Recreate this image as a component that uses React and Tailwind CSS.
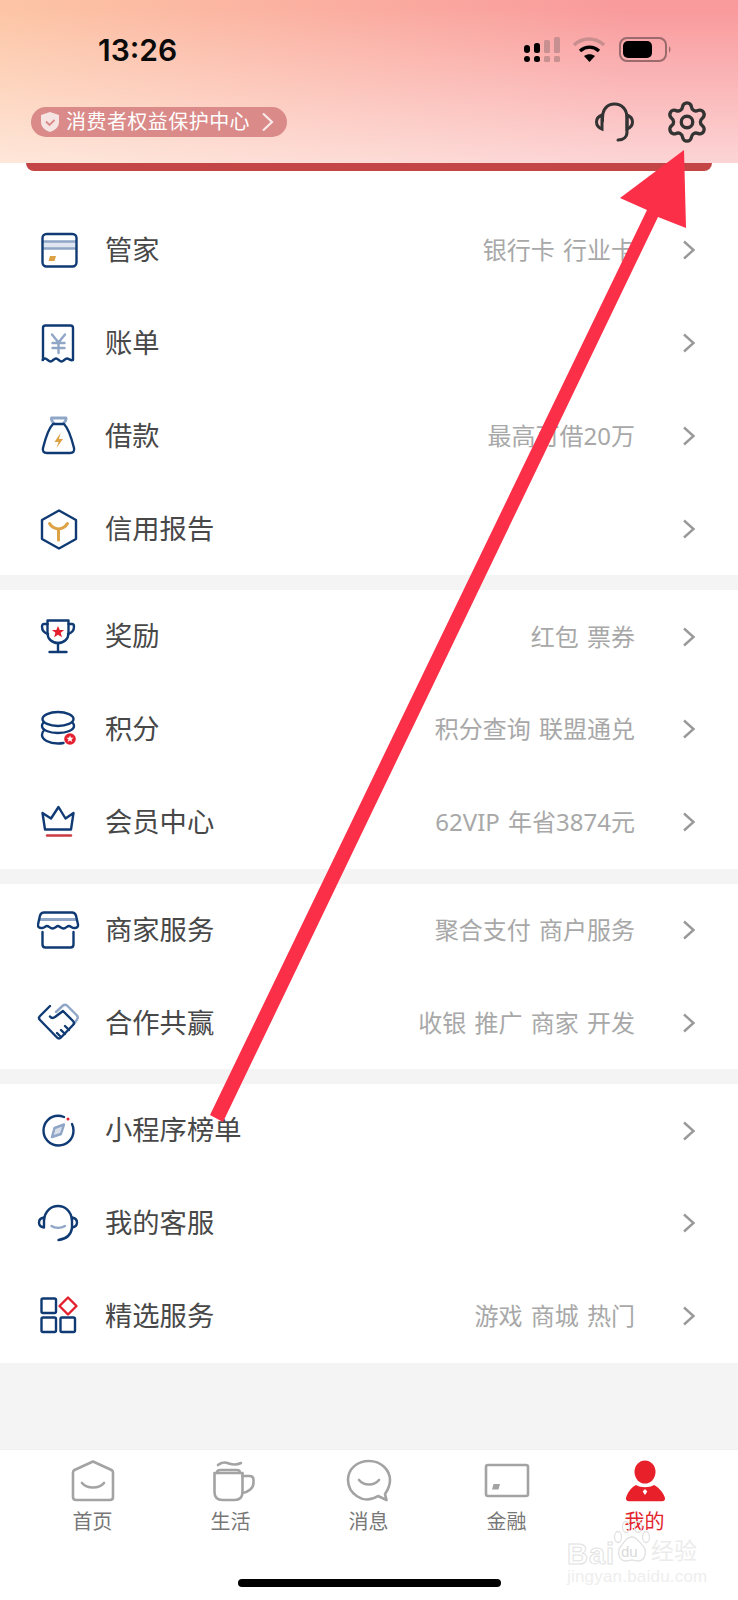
import { Settings } from 'lucide-react'

const NAVY = '#0f3a73'
const LIGHT = '#8fa6c6'
const GOLD = '#dca243'
const RED = '#e5202e'
const GRAY = '#a3a3a3'

const Box = ({ children }) => (
  <svg width="44" height="44" viewBox="0 0 44 44" fill="none" stroke={NAVY} strokeWidth="2.4" strokeLinecap="round" strokeLinejoin="round" className="shrink-0">
    {children}
  </svg>
)

const icons = {
  card: (
    <Box>
      <path d="M6 13h33v8H6z" fill="#dfe6f0" stroke="none" />
      <path d="M6 13.5h33M6 20.5h33" stroke={LIGHT} />
      <rect x="5.5" y="6" width="34" height="32.5" rx="4" />
      <path d="M13 28h6l-1.5 5h-6z" fill={GOLD} stroke="none" />
    </Box>
  ),
  bill: (
    <Box>
      <path d="M6 39V7q0-2.5 2.5-2.5h25Q36 4.500 36 7v32c-2.500 1-4 -1.500-6-1.500s-3.500 3-5.500 3-3.500-3-5.500-3-3.500 3-5.500 3-3.500-3-5.500-3c-1 0-2 1-2.500 1.500z" />
      <path d="M15 13.500l6.500 8 6.500-8M21.500 21.500V32M15.500 22h12M15.500 27h12" stroke={LIGHT} />
    </Box>
  ),
  bag: (
    <Box>
      <path d="M17 9.500c-2-2-3-3-2.500-5.500h14.500c.5 2.500-.5 3.500-2.500 5.500" stroke={LIGHT} strokeWidth="2.800" />
      <path d="M16 10h11c4 4 7 12 10 24q1 5-4 5H10q-5 0-4-5c3-12 6-20 10-24z" />
      <path d="M23.500 19l-6 9h4l-2 6 6.500-9h-4z" fill={GOLD} stroke="none" />
    </Box>
  ),
  hex: (
    <Box>
      <path d="M22 3.500l17 9.500v19l-17 9.500L5 32V13z" />
      <path d="M12.500 16.500c2 3.500 5 5 9 5.500 4-.5 7-2 9-5.500M21.500 22v11" stroke={GOLD} strokeWidth="3" />
    </Box>
  ),
  trophy: (
    <Box>
      <path d="M10.500 5.500h21V18c0 6-4.500 10-10.500 10S10.500 24 10.500 18z" />
      <path d="M10.500 9H7q-2 0-2 2.500c0 3.500 2.500 6.500 6 7.500M31.500 9H35q2 0 2 2.500c0 3.500-2.500 6.500-6 7.500M21 28v9M12.500 37h17" />
      <path d="M21 11l1.800 4h4.400l-3.500 2.800 1.300 4.400L21 19.700l-3.900 2.500 1.300-4.400-3.500-2.800h4.400z" fill={RED} stroke="none" />
    </Box>
  ),
  coins: (
    <Box>
      <ellipse cx="21" cy="12" rx="15.500" ry="7" />
      <path d="M6.500 15.500c-1 1-1.500 2-1.500 3.500 0 4 7 7 16 7s16-3 16-7c0-1.500-.5-2.500-1.500-3.500" />
      <path d="M6.500 24c-1 1-1.500 2.500-1.500 4 0 4.500 7 8.500 16 8.500 2 0 4-.2 5.500-.5" />
      <circle cx="33" cy="32" r="5.800" fill={RED} stroke="none" />
      <path d="M33 28.500l1 2.300h2.500l-2 1.700.8 2.600-2.300-1.500-2.300 1.500.8-2.600-2-1.700H32z" fill="#fff" stroke="none" />
    </Box>
  ),
  crown: (
    <Box>
      <path d="M5.500 13l8.500 5.500L21.500 7l7 11.500 8-5.500-2.500 16.500H8z" />
      <path d="M10 35.500h24" stroke="#cc3a44" />
    </Box>
  ),
  store: (
    <Box>
      <path d="M3 11.500h36" stroke={LIGHT} strokeWidth="2.800" />
      <path d="M7 4.500h28q3 0 4 3l2 9q.5 3-3 3.500c-3 .5-4-2-6-2s-3 2.500-5.500 2.500-4-2.500-5.500-2.500-3 2.500-5.500 2.500-3.500-2.500-5.500-2.500-3 2.500-6 2q-3.500-.5-3-3.500l2-9q1-3 4-3z" />
      <path d="M5.500 24v12.500q0 3 3 3h25q3 0 3-3V24" />
    </Box>
  ),
  shake: (
    <Box>
      <path d="M19 11l7-6.500q2-1.500 4 0l10 10q1.500 2 0 4L37 23" stroke={LIGHT} />
      <path d="M13 5L3 15q-2 2 0 4l17 17.500q2 2 4 0L36 24q2-2 0-4L26 10l-8 6q-3 2-5-.5" />
      <path d="M24 29l4 4M28 25l4 4M20 32l3 3" />
    </Box>
  ),
  compass: (
    <Box>
      <path d="M27 8c-2-.8-4-1.200-6-1.200C13 6.800 6.500 13.300 6.500 21.500S13 36.500 21.500 36.500 36.500 30 36.500 21.500c0-2.500-.5-4.500-1.500-6.500" />
      <path d="M15 28l2.500-9L27 15.500 24 25z" stroke={LIGHT} fill="#d7dfeb" />
      <circle cx="31" cy="10" r="1.500" fill={RED} stroke="none" />
    </Box>
  ),
  agent: (
    <Box>
      <path d="M7 19C8 10 14 5 21 5s13 5 14 14" />
      <path d="M7 16.500q-5 .8-5 5t5 5zM35 16.500q5 .8 5 5t-5 5z" />
      <path d="M35 27c-1 7-6 11-13.500 12" />
      <path d="M14.500 25c3.500 2.500 9.500 2.500 13.500 0" stroke={LIGHT} />
    </Box>
  ),
  grid: (
    <Box>
      <rect x="4.500" y="4.500" width="14.500" height="14.500" rx="1.500" />
      <rect x="4.500" y="23.500" width="14.500" height="14.500" rx="1.500" />
      <rect x="23.500" y="23.500" width="14.500" height="14.500" rx="1.500" />
      <path d="M31 3.500l8.500 8.500-8.500 8.500-8.500-8.500z" stroke={RED} />
    </Box>
  ),
}

const sections = [
  [
    { icon: 'card', label: '管家', sub: '银行卡 行业卡' },
    { icon: 'bill', label: '账单' },
    { icon: 'bag', label: '借款', sub: '最高可借20万' },
    { icon: 'hex', label: '信用报告' },
  ],
  [
    { icon: 'trophy', label: '奖励', sub: '红包 票券' },
    { icon: 'coins', label: '积分', sub: '积分查询 联盟通兑' },
    { icon: 'crown', label: '会员中心', sub: '62VIP 年省3874元' },
  ],
  [
    { icon: 'store', label: '商家服务', sub: '聚合支付 商户服务' },
    { icon: 'shake', label: '合作共赢', sub: '收银 推广 商家 开发' },
  ],
  [
    { icon: 'compass', label: '小程序榜单' },
    { icon: 'agent', label: '我的客服' },
    { icon: 'grid', label: '精选服务', sub: '游戏 商城 热门' },
  ],
]

function Row({ icon, label, sub }) {
  return (
    <div className="flex items-center h-[92.8px] pl-[37px] pr-[42px]">
      {icons[icon]}
      <span className="ml-[24px] text-[27.3px] leading-none text-[#484848] mt-[1px]">{label}</span>
      {sub && <span className="ml-auto text-[24px] leading-none text-[#a8a8a8] [word-spacing:2px] [font-family:'Noto_Sans','Noto_Sans_CJK_SC',sans-serif]">{sub}</span>}
      <svg width="14" height="20" viewBox="0 0 14 20" fill="none" stroke="#999" strokeWidth="2.4" className={sub ? 'ml-[47px]' : 'ml-auto'}>
        <path d="M2 1.500L11.500 10 2 18.500" />
      </svg>
    </div>
  )
}

const TabBox = ({ children, stroke = GRAY }) => (
  <svg width="48" height="44" viewBox="0 0 48 44" fill="none" stroke={stroke} strokeWidth="2.600" strokeLinecap="round" strokeLinejoin="round">
    {children}
  </svg>
)

const tabs = [
  {
    label: '首页',
    icon: (
      <TabBox>
        <path d="M24 2.500l18.500 8.500q1.500.8 1.500 2.500V38q0 3-3 3H7q-3 0-3-3V13.500q0-1.700 1.500-2.500z" />
        <path d="M13 24c5 6 17 6 22 0" />
      </TabBox>
    ),
  },
  {
    label: '生活',
    icon: (
      <TabBox>
        <path d="M11 6c4-3.500 7-3 11-1.500s7 2 12-.5" />
        <path d="M7.500 14h28v19q0 8-8 8h-12q-8 0-8-8z" />
        <path d="M10 14c0-2 1-3 3-3h17c2 0 3 1 3 3M35.500 17h7q4 0 4 4v3c0 5-5 9-11 10" />
      </TabBox>
    ),
  },
  {
    label: '消息',
    icon: (
      <TabBox>
        <path d="M33 37C17 47 3 33 3 21 3 10 12 2 24 2s21 9 21 19c0 7-3 11-5 14l1.500 6z" />
        <path d="M14 21c5 6 15 6 20 0" />
      </TabBox>
    ),
  },
  {
    label: '金融',
    icon: (
      <TabBox>
        <rect x="3" y="6" width="42" height="31" rx="2" />
        <path d="M10.500 25h6.500l-1.500 5.500h-6.500z" fill={GRAY} stroke="none" />
      </TabBox>
    ),
  },
  {
    label: '我的',
    active: true,
    icon: (
      <svg width="48" height="44" viewBox="0 0 48 44">
        <ellipse cx="24" cy="13" rx="10.500" ry="11.500" fill="#e8202a" />
        <path d="M15 26c5 3 13 3 18 0 6 3 10 9 11 13q.5 3-3 3.300H8q-3.500-.3-3-3.300c1-4 4-10 10-13z" fill="#e8202a" />
        <path d="M24 30l2.300 2.500L24 36l-2.300-3.500z" fill="#fff" />
      </svg>
    ),
  },
]

function Watermark() {
  return (
    <div className="absolute left-[567px] top-[1520px] w-[134px] h-[64px]">
      <span className="absolute left-0 top-[20px] text-[29px] leading-none font-bold tracking-[1px] text-white [font-family:'Liberation_Sans',sans-serif] [-webkit-text-stroke:1px_#e2e2e2]">Bai</span>
      <svg width="40" height="44" viewBox="0 0 40 44" fill="none" stroke="#e2e2e2" strokeWidth="1.300" className="absolute left-[45px] top-0">
        <ellipse cx="6" cy="17" rx="3.500" ry="5.500" />
        <ellipse cx="14" cy="7" rx="3.500" ry="5.500" />
        <ellipse cx="26" cy="7" rx="3.500" ry="5.500" />
        <ellipse cx="34" cy="17" rx="3.500" ry="5.500" />
        <path d="M20 17c5 0 7 5 11 9s3 15-5 15c-3 0-4-1-6-1s-3 1-6 1c-8 0-9-10-5-15s6-9 11-9z" />
      </svg>
      <span className="absolute left-[54px] top-[24px] text-[15px] leading-none text-[#dadada] [font-family:'Liberation_Sans',sans-serif]">du</span>
      <span className="absolute left-[84px] top-[20px] text-[23px] leading-none text-[#ececec]">经验</span>
      <span className="absolute left-0 top-[48px] text-[17px] leading-none tracking-[.2px] text-[#eeeeee] whitespace-nowrap [font-family:'Liberation_Sans',sans-serif]">jingyan.baidu.com</span>
    </div>
  )
}

export default function App() {
  return (
    <div className="relative w-[738px] h-[1600px] overflow-hidden flex flex-col bg-[#f4f4f4] [font-family:Inter,'Noto_Sans_CJK_SC',sans-serif]">
      {/* Header */}
      <div className="h-[163px] shrink-0 px-[31px] bg-[linear-gradient(180deg,rgba(255,255,255,0)_5%,rgba(255,255,255,.58)),linear-gradient(90deg,#fdc5a5,#f99a9c_85%)]">
        <div className="flex items-center h-[62px] pt-[37px] pl-[67px]">
          <span className="text-[30px] leading-none font-semibold text-[#0a0a0a] mt-[1px]">13:26</span>
          <svg width="150" height="28" viewBox="0 0 150 28" className="ml-auto mr-[34px]">
            <g fill="#000">
              <rect x="1" y="9" width="6" height="8" rx="3" />
              <rect x="1" y="20" width="6" height="6" rx="3" />
              <rect x="11" y="7" width="6" height="10" rx="2.500" />
              <rect x="11" y="20" width="6" height="6" rx="2.500" />
            </g>
            <g fill="#c89090">
              <rect x="21" y="4" width="6" height="13" rx="1.500" />
              <rect x="21" y="20" width="6" height="6" rx="1.500" />
              <rect x="31" y="1" width="6" height="16" rx="1.500" />
              <rect x="31" y="20" width="6" height="6" rx="1.500" />
            </g>
            <path d="M51 9c9-8 21-8 30 0" fill="none" stroke="#c98f8f" strokeWidth="3.500" />
            <path d="M57 15c6-5 13-5 19 0" fill="none" stroke="#000" strokeWidth="3.500" />
            <path d="M66.500 26l-5.500-6c3.500-2.500 7.500-2.500 11 0z" fill="#000" />
            <rect x="97" y="2" width="46" height="23" rx="7" fill="none" stroke="#9a6a6c" strokeWidth="2" />
            <rect x="100" y="5" width="29" height="17" rx="5" fill="#000" />
            <path d="M146 10q3 3.500 0 7z" fill="#9a6a6c" />
          </svg>
        </div>
        <div className="flex items-center mt-[37px]">
          <div className="flex items-center h-[30px] w-[256px] rounded-full bg-[#da8a88] pl-[9px]">
            <svg width="20" height="22" viewBox="0 0 20 22" className="shrink-0">
              <path d="M10 1l9 3v7c0 5-4 8.500-9 10C5 19.500 1 16 1 11V4z" fill="#f6e4e3" />
              <path d="M6 10.500l3.500 3.500 5-5" fill="none" stroke="#da8a88" strokeWidth="1.800" />
            </svg>
            <span className="ml-[6px] text-[20px] tracking-[.45px] leading-none text-white whitespace-nowrap">消费者权益保护中心</span>
            <svg width="13" height="20" viewBox="0 0 13 20" fill="none" stroke="#fbeaea" strokeWidth="2.200" className="ml-[11px]">
              <path d="M2 1.500L11 10l-9 8.500" />
            </svg>
          </div>
          <svg width="40" height="40" viewBox="0 0 40 40" fill="none" stroke="#333" strokeWidth="3" strokeLinecap="round" className="ml-auto mr-[29px]">
            <path d="M7.500 19V16C7.500 7 12.500 2 19.500 2S32 7 32 16v14c0 5-3.500 8-9 8" />
            <path d="M7 13q-5.500 2-5.500 7T7 27zM32 13q5.500 2 5.500 7T32 27z" />
          </svg>
          <Settings size={46} strokeWidth={1.750} color="#333" className="mr-[-3px]" />
        </div>
      </div>

      {/* Red card edge sticking out under the header */}
      <div className="bg-white shrink-0 h-[41px]">
        <div className="mx-[26px] h-[8px] rounded-b-[10px] bg-[#c44546]" />
      </div>

      {/* List */}
      <div className="flex flex-col gap-[15px] shrink-0">
        {sections.map((rows, i) => (
          <div key={i} className="bg-white">
            {rows.map(r => <Row key={r.label} {...r} />)}
          </div>
        ))}
      </div>

      {/* Tab bar */}
      <div className="mt-auto h-[151px] shrink-0 bg-white pt-[9px] border-t border-[#f0f0f0]">
        <div className="flex px-[23.500px]">
          {tabs.map(t => (
            <div key={t.label} className="w-[138px] flex flex-col items-center gap-[5px]">
              {t.icon}
              <span className={`text-[20px] leading-[28px] ${t.active ? 'text-[#e2242c]' : 'text-[#777]'}`}>{t.label}</span>
            </div>
          ))}
        </div>
        <div className="w-[263px] h-[8px] rounded-full bg-black mx-auto mt-[43px]" />
      </div>

      <Watermark />

      {/* Annotation arrow drawn on top of the screenshot */}
      <svg width="738" height="1600" viewBox="0 0 738 1600" className="absolute inset-0 pointer-events-none">
        <path d="M684 150L686 228 658 217 223 1122 210 1115 647 210 620 198z" fill="#fb3048" />
      </svg>
    </div>
  )
}
